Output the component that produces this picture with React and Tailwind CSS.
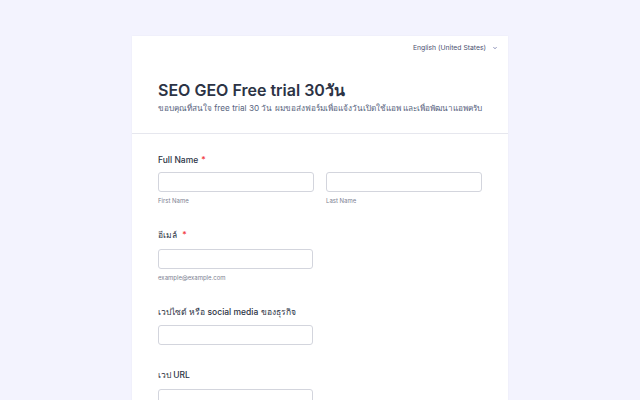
import React from 'react';

const Label = ({ children, required }) => (
  <div className="text-[8.5px] leading-[12px] font-medium text-[#2c3345]">
    {children}
    {required && <span className="text-[#f23a3c] ml-[3px]">*</span>}
  </div>
);

const Input = ({ className = '' }) => (
  <div className={`h-[20px] rounded-[3px] border border-[#d3d5dd] bg-white ${className}`}></div>
);

const Sub = ({ children }) => (
  <div className="text-[6px] leading-[8px] text-[#7d8192] mt-[5px]">{children}</div>
);

export default function App() {
  return (
    <div
      className="h-[400px] w-[640px] overflow-hidden bg-[#f3f3fe] pt-[36px]"
      style={{ fontFamily: 'Inter, "Noto Sans", "DejaVu Sans", sans-serif' }}
    >
      <div className="mx-auto w-[376px] bg-white shadow-[0_0_2px_rgba(0,0,0,0.04)] h-[400px]">
        {/* Header */}
        <div className="h-[98px] border-b border-[#e6e7ee] pl-[26px] pr-[10px] pt-[7px]">
          <div className="flex justify-end items-center gap-[6px] text-[6.8px] leading-[10px] text-[#4b5170]">
            <span>English (United States)</span>
            <svg width="6" height="6" viewBox="0 0 6 6" className="text-[#6f76a7]">
              <path d="M1.5 2.2 L3 3.7 L4.5 2.2" fill="none" stroke="currentColor" strokeWidth="0.9" />
            </svg>
          </div>
          <h1 className="mt-[27px] text-[16px] leading-[20px] font-semibold text-[#2c3345]">
            SEO GEO Free trial 30วัน
          </h1>
          <p className="mt-[3px] text-[8.2px] leading-[11px] text-[#57647e] whitespace-nowrap">
            ขอบคุณที่สนใจ free trial 30 วัน ผมขอส่งฟอร์มเพื่อแจ้งวันเปิดใช้แอพ และเพื่อพัฒนาแอพครับ
          </p>
        </div>

        {/* Body */}
        <div className="px-[26px] pt-[20px]">
          <Label required>Full Name</Label>
          <div className="grid grid-cols-2 gap-[12px] mt-[6px]">
            <div>
              <Input />
              <Sub>First Name</Sub>
            </div>
            <div>
              <Input />
              <Sub>Last Name</Sub>
            </div>
          </div>

          <div className="mt-[24px]">
            <Label required>อีเมล์ </Label>
            <Input className="mt-[8px] w-[155px]" />
            <Sub>example@example.com</Sub>
          </div>

          <div className="mt-[24px]">
            <Label>เวปไซต์ หรือ social media ของธุรกิจ</Label>
            <Input className="mt-[7px] w-[155px]" />
          </div>

          <div className="mt-[24px]">
            <Label>เวป URL</Label>
            <Input className="mt-[8px] w-[155px]" />
          </div>
        </div>
      </div>
    </div>
  );
}
